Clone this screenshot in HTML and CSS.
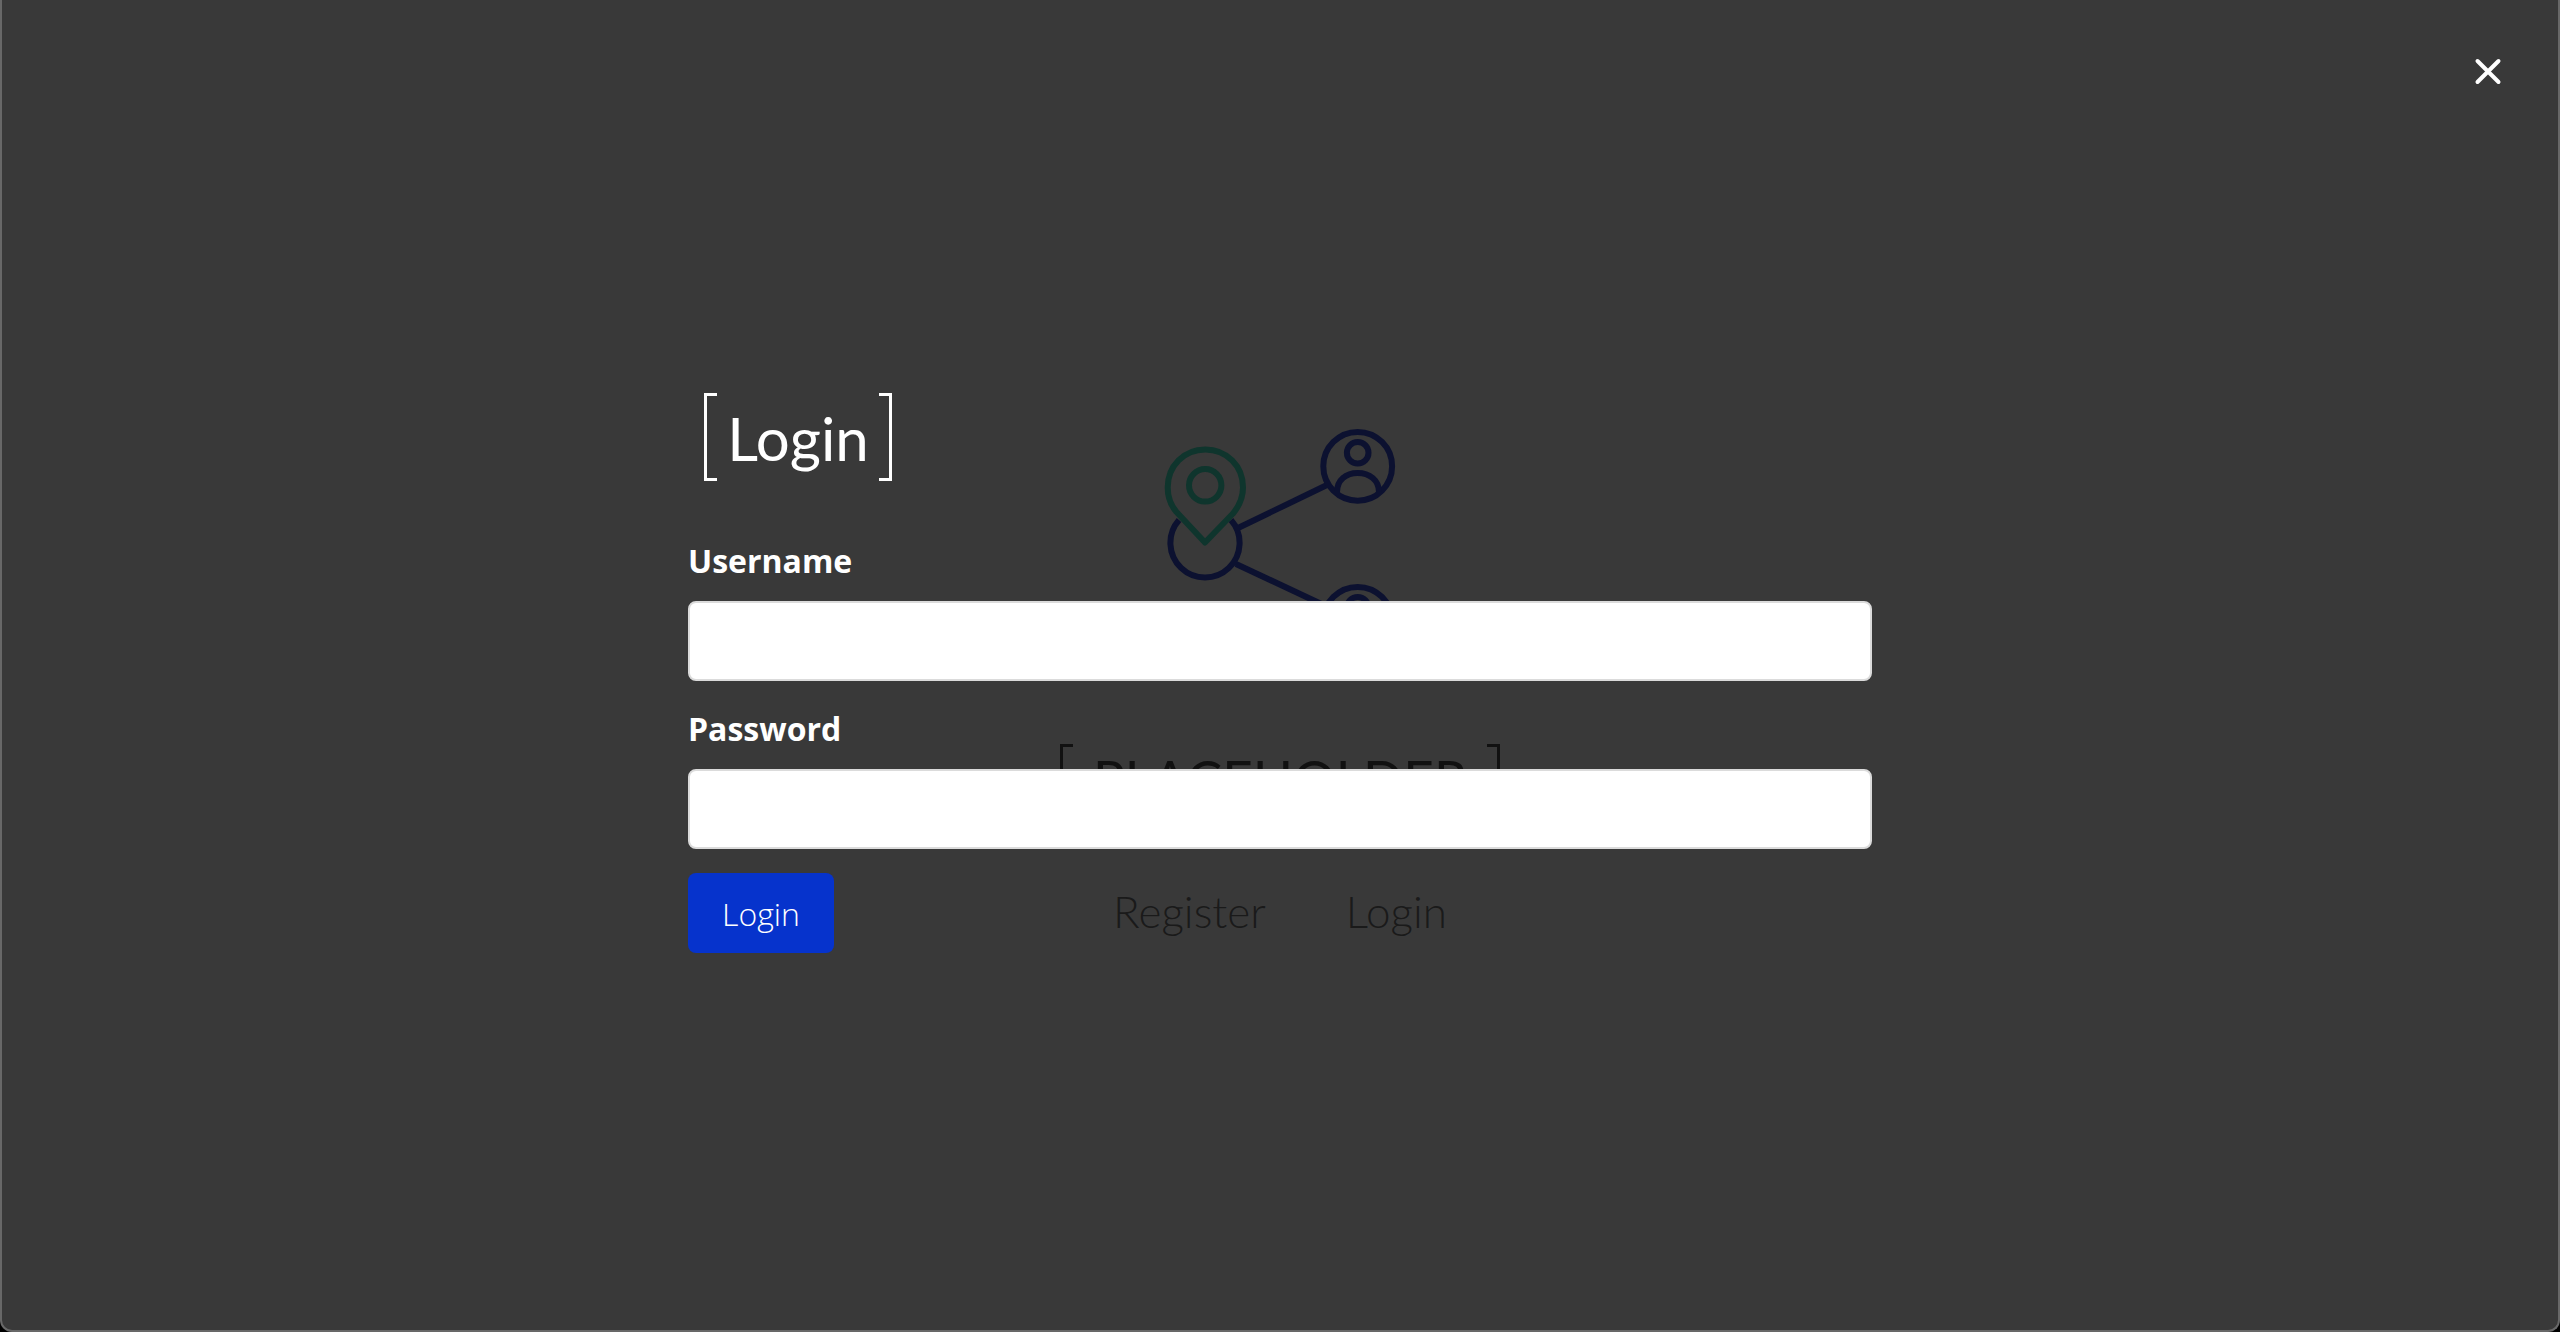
FILE: index.html
```
<!DOCTYPE html>
<html lang="en">
<head>
<meta charset="utf-8">
<title>Login</title>
<link rel="stylesheet" href="styles.css">
</head>
<body>
<div class="window">
  <main class="hero">
    <svg class="logo" viewBox="0 0 232 232" fill="none" stroke="#0c1130" stroke-width="6" aria-hidden="true">
      <path d="M67 92A34.6 34.6 0 1 1 15 92M74 100L164 56.500M72 136L168 181"/>
      <g id="person">
        <circle cx="193.700" cy="38.300" r="34.400"/>
        <circle cx="193.700" cy="24.700" r="10.800"/>
        <path d="M173 64C173 52 182 45 193.700 45S215 52 215 64"/>
      </g>
      <use href="#person" y="155"/>
      <g stroke="#0f352d" stroke-linejoin="round">
        <path d="M41 114.500L12.500 84C6.500 77 3.700 69 3.700 59.500C3.700 38 20 21.500 41.300 21.500S79 38 79 59.500C79 69 76 77 69 85.500Z"/>
        <circle cx="41.200" cy="57.300" r="16.200"/>
      </g>
    </svg>
    <h1 class="bracketed brand">PLACEHOLDER</h1>
    <nav class="links">
      <a href="#register">Register</a>
      <a href="#login">Login</a>
    </nav>
  </main>
  <section class="modal" id="login">
    <form class="form">
      <h2 class="bracketed title">Login</h2>
      <div class="field">
        <label for="username">Username</label>
        <input id="username" type="text">
      </div>
      <div class="field">
        <label for="password">Password</label>
        <input id="password" type="password">
      </div>
      <button class="submit" type="submit">Login</button>
    </form>
    <button class="close" type="button" aria-label="Close">
      <svg viewBox="0 0 32 32" width="32" height="32" fill="none" stroke="#fff" stroke-width="4" stroke-linecap="round"><path d="M5.500 5L26.500 26M26.500 5L5.500 26"/></svg>
    </button>
  </section>
</div>
</body>
</html>
```
FILE: styles.css
```
*,
*::before,
*::after {
  box-sizing: border-box;
}

body {
  margin: 0;
  background: #000;
  font-family: "Open Sans", sans-serif;
}

h1,
h2 {
  margin: 0;
}

.window {
  position: relative;
  display: grid;
  min-height: 100vh;
  background: #393939;
  border: solid #686868;
  border-width: 0 2px 2px;
  border-radius: 0 0 12px 12px;
}

.hero {
  display: flex;
  flex-direction: column;
  align-items: center;
  justify-content: center;
  padding-top: 40px;
  font-family: Lato, sans-serif;
}

.logo {
  width: 232px;
  height: 232px;
}

.bracketed {
  display: flex;
  align-items: flex-start;
  justify-content: space-between;
  height: 88px;
  font-family: Lato, sans-serif;
}

.bracketed::before,
.bracketed::after {
  content: "";
  width: 13px;
  height: 88px;
  border: 3px solid;
}

.bracketed::before {
  border-right: 0;
}

.bracketed::after {
  border-left: 0;
}

.brand {
  width: 440px;
  margin-top: 84px;
  color: #111;
  font-size: 53px;
  font-weight: 400;
  line-height: 70px;
}

.links {
  display: flex;
  gap: 80px;
  margin-top: 48px;
}

.links a {
  color: #1a1a1a;
  font-size: 44px;
  font-weight: 300;
  line-height: 62px;
  text-decoration: none;
}

.modal {
  position: absolute;
  inset: 0 0 -4px;
  display: flex;
  align-items: center;
  justify-content: center;
}

.form {
  display: flex;
  flex-direction: column;
  align-items: flex-start;
  gap: 24px;
  width: 100%;
  max-width: 1184px;
}

.title {
  width: 188px;
  margin: 12px 16px 32px;
  color: #fff;
  font-size: 60px;
  font-weight: 400;
  line-height: 90px;
}

.field {
  display: flex;
  flex-direction: column;
  gap: 16px;
  width: 100%;
}

.field label {
  color: #fff;
  font-size: 32px;
  font-weight: 700;
  line-height: 48px;
}

.field input {
  width: 100%;
  height: 80px;
  padding: 0 24px;
  background: #fff;
  border: 2px solid #dbdbdb;
  border-radius: 8px;
  font: 32px "Open Sans", sans-serif;
}

.submit {
  height: 80px;
  padding: 0 34px;
  background: #0633cc;
  border: 0;
  border-radius: 8px;
  color: #fff;
  font: 300 32px "Open Sans", sans-serif;
}

.close {
  position: absolute;
  top: 40px;
  right: 38px;
  display: grid;
  place-items: center;
  width: 64px;
  height: 64px;
  padding: 0;
  background: none;
  border: 0;
}
```
